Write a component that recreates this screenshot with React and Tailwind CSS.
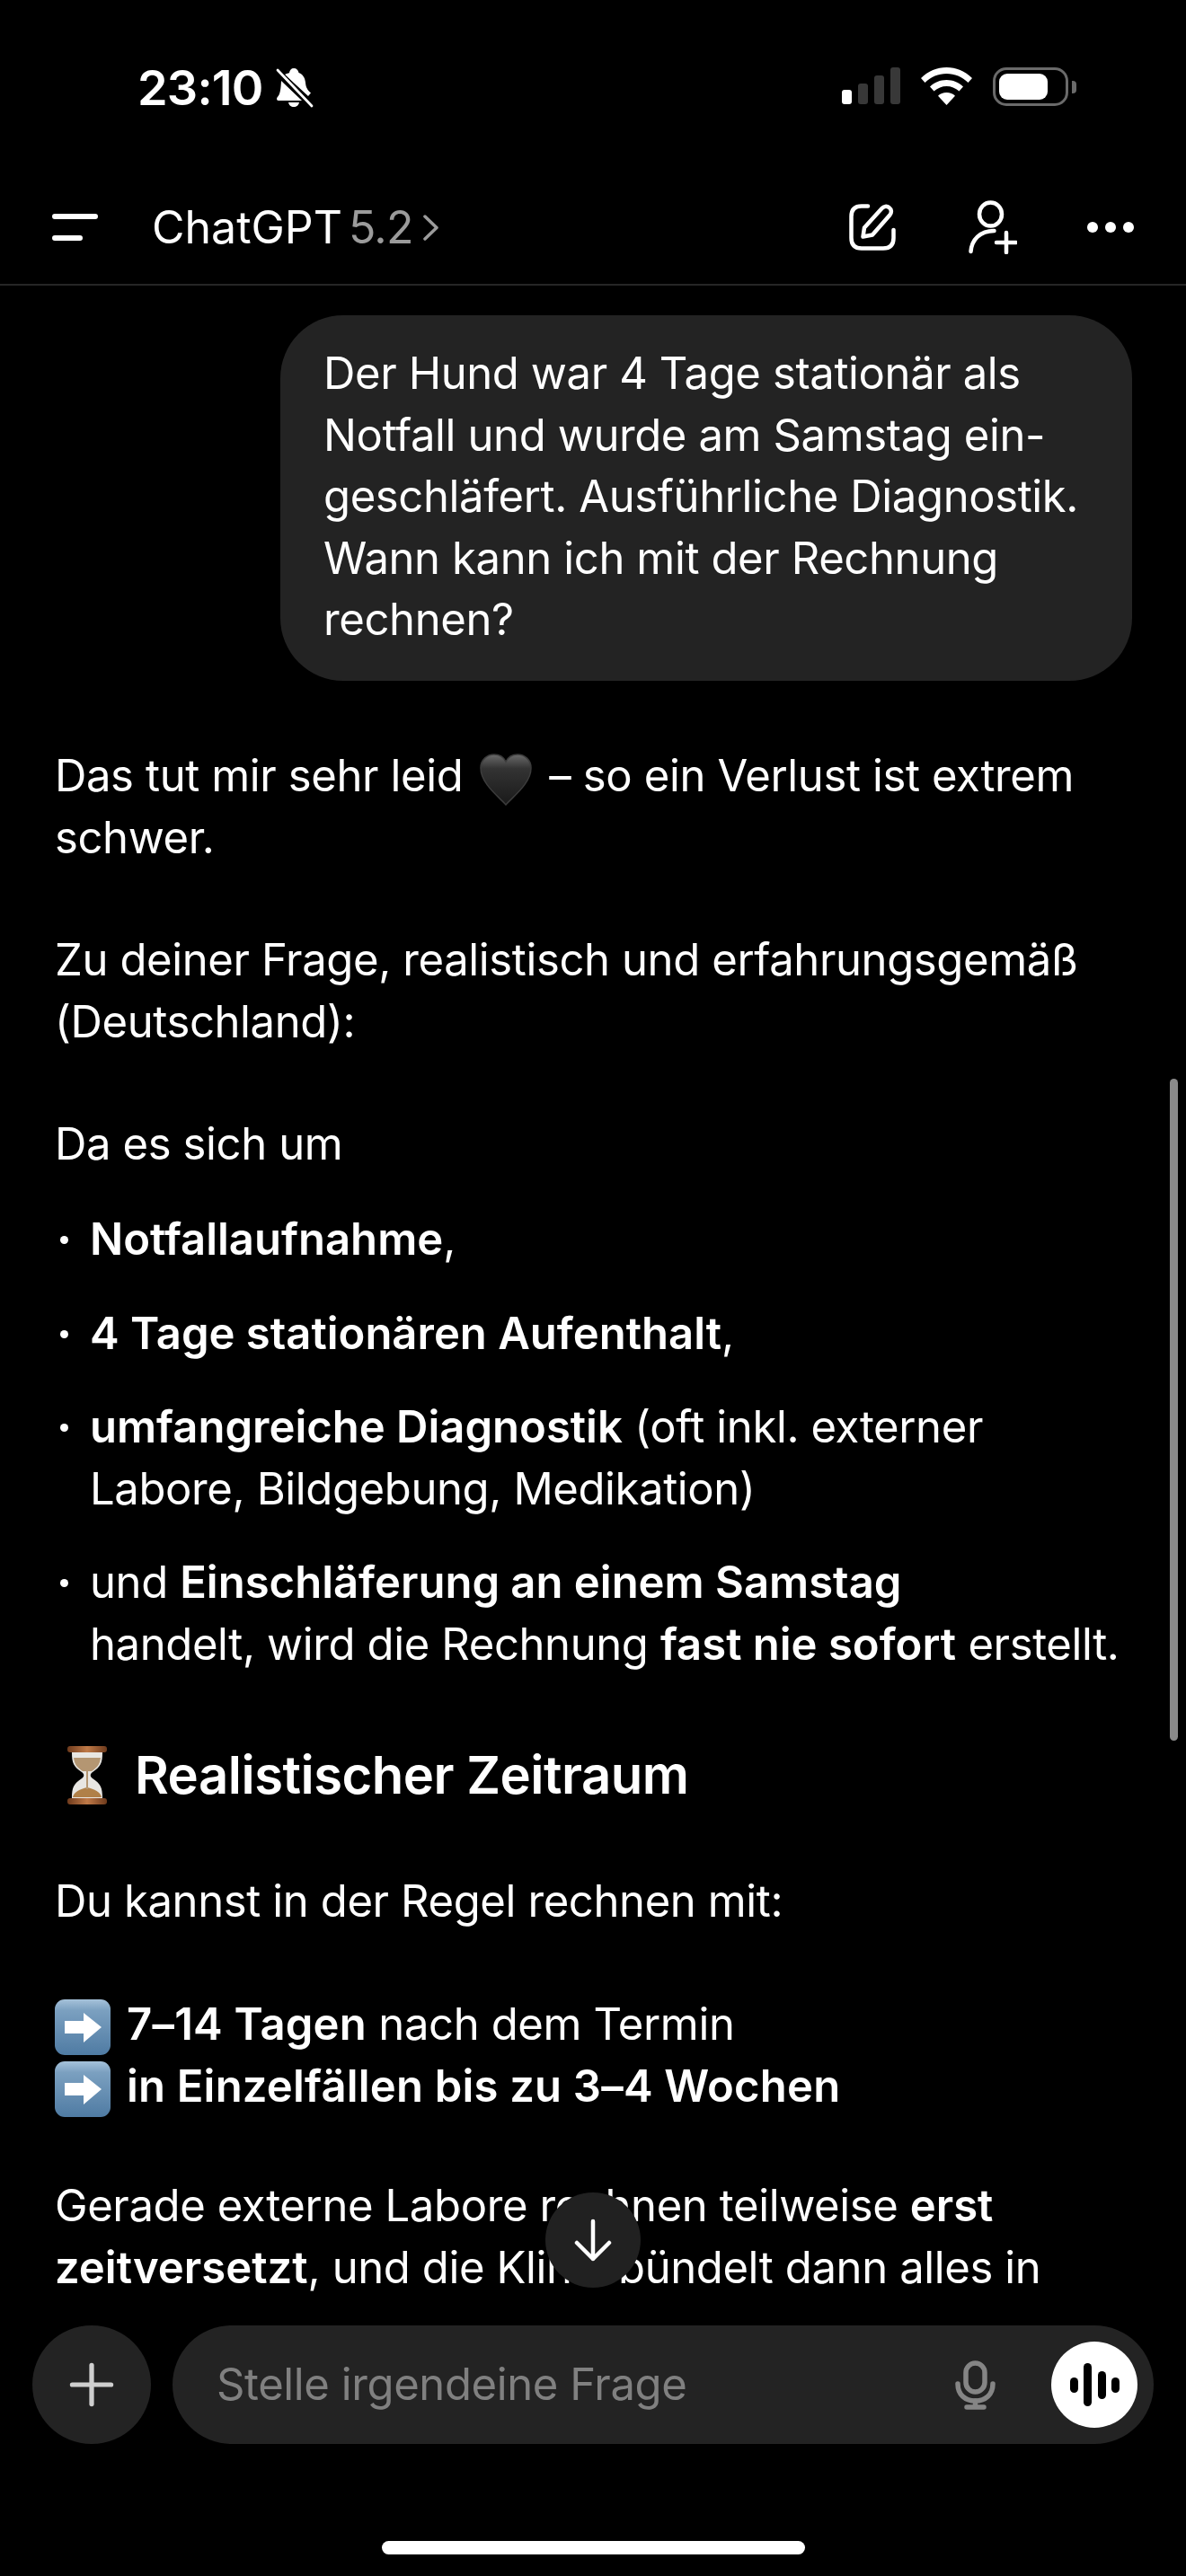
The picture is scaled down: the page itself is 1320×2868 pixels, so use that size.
import { Plus } from 'lucide-react';

const Bell = () => (
  <svg width="42" height="46" viewBox="0 0 42 46" className="ml-[14px]">
    <path fill="#fff" d="M20 1c3 0 5 2 5.500 5 5 2 7 6 7.500 11 .4 5 2 8 6 11.500L36 32 10 8c2-1 4-1.500 5-2 .5-3 2-5 5-5zM6 15l23 22H3c-2 0-2.500-2-1.500-3.500C5 30 5.500 24 6 15zM14 39h12c-.5 3-3 5-6 5s-5.500-2-6-5z" />
    <path stroke="#000" strokeWidth="6" d="M1 3l40 41" />
    <path stroke="#fff" strokeWidth="2.800" strokeLinecap="round" d="M2 3l38 40" />
  </svg>
);

const Signal = () => (
  <svg width="65" height="41" viewBox="0 0 65 41">
    <rect x="0" y="25" width="11" height="16" rx="3" fill="#fff" />
    <rect x="18" y="18" width="11" height="23" rx="3" fill="#383838" />
    <rect x="36" y="9" width="11" height="32" rx="3" fill="#383838" />
    <rect x="54" y="0" width="11" height="41" rx="3" fill="#383838" />
  </svg>
);

const Wifi = () => (
  <svg width="57" height="42" viewBox="0 0 57 42" fill="#fff">
    <path d="M28.500 0C39 0 49 4 57 12l-4.500 5C46 10.500 37.500 7 28.500 7S11 10.500 4.500 17L0 12C8 4 18 0 28.500 0z" />
    <path d="M28.500 14c7 0 13.500 2.700 18.500 7.500l-4.500 5C38.500 23 33.500 21 28.500 21s-10 2-14 5.500l-4.500-5C15 16.700 21.500 14 28.500 14z" />
    <path d="M28.500 28c3.700 0 7 1.300 9.500 3.700L28.500 42 19 31.700c2.500-2.400 5.800-3.700 9.500-3.700z" />
  </svg>
);

const Battery = () => (
  <div className="flex items-center ml-[23px]">
    <div className="w-[84px] h-[43px] rounded-[15px] border-[3px] border-[#6a6a6a] p-[4px]">
      <div className="w-[54px] h-full rounded-[9px] bg-white" />
    </div>
    <div className="w-[5px] h-[14px] ml-[4px] rounded-r-[4px] bg-[#6a6a6a]" />
  </div>
);

const Hamburger = () => (
  <svg width="51" height="30" viewBox="0 0 51 30">
    <path stroke="#fff" strokeWidth="6" strokeLinecap="round" d="M3 3h45M3 27h28" />
  </svg>
);

const EditIcon = () => (
  <svg width="52" height="52" viewBox="0 0 52 52" fill="none" stroke="#fff" strokeWidth="4.500" strokeLinecap="round" strokeLinejoin="round">
    <path d="M21 2.500h-7C6.500 2.500 2.500 6.500 2.500 14v24c0 7.500 4 11.500 11.500 11.500h24c7.500 0 11.500-4 11.500-11.500v-9" />
    <path d="M15.500 36.500l1.500-10L36.500 5c2-2.300 5.500-3 8-1 2.700 2 3.200 5.500 1 8.200L26 34.500z" />
  </svg>
);

const AddUserIcon = () => (
  <svg width="54" height="60" viewBox="0 0 54 60" fill="none" stroke="#fff" strokeWidth="4.500" strokeLinecap="round">
    <ellipse cx="24.500" cy="15.500" rx="12.500" ry="13" />
    <path d="M2.500 57c1-13 10-23 26-23" />
    <path d="M42 36v22M31 47h22" />
  </svg>
);

const Dots = () => (
  <svg width="52" height="12" viewBox="0 0 52 12" fill="#fff">
    <circle cx="6" cy="6" r="6" />
    <circle cx="26" cy="6" r="6" />
    <circle cx="46" cy="6" r="6" />
  </svg>
);

const Heart = () => (
  <svg width="58" height="58" viewBox="0 0 58 58" className="inline-block align-[-16px] mx-[19px]">
    <defs>
      <linearGradient id="heartFill" x1="0" y1="0" x2="0" y2="1">
        <stop offset="0" stopColor="#6b6b6b" />
        <stop offset="0.28" stopColor="#333" />
        <stop offset="1" stopColor="#1a1a1a" />
      </linearGradient>
    </defs>
    <path fill="url(#heartFill)" stroke="#3c3c3c" strokeWidth="1.500" d="M29 57C20 47 1 33 1 16 1 7 8 1 16 1c6 0 10.500 3 13 8 2.500-5 7-8 13-8 8 0 15 6 15 15 0 17-19 31-28 41z" />
  </svg>
);

const Hourglass = () => (
  <svg width="44" height="65" viewBox="0 0 44 65" className="inline-block align-[-12px] mr-[31px]">
    <defs>
      <linearGradient id="wood" x1="0" y1="0" x2="1" y2="0">
        <stop offset="0" stopColor="#6e3a1c" />
        <stop offset="0.5" stopColor="#c07a48" />
        <stop offset="1" stopColor="#6e3a1c" />
      </linearGradient>
    </defs>
    <path fill="#e8e6e2" d="M5 7h34c0 12-2 16-11 22-3 2-3 5 0 7 9 6 11 10 11 22H5c0-12 2-16 11-22 3-2 3-5 0-7C7 23 5 19 5 7z" />
    <path fill="#b49672" d="M7 13h30c-1 8-4 11-10 15h-10C11 24 8 21 7 13z" />
    <path fill="#b08048" d="M6 57c1-6 8-9 16-11 8 2 15 5 16 11z" />
    <path fill="#b49672" d="M21 28h2v20h-2z" />
    <rect x="0" y="0" width="44" height="7" rx="3" fill="url(#wood)" />
    <rect x="0" y="58" width="44" height="7" rx="3" fill="url(#wood)" />
  </svg>
);

const ArrowEmoji = () => (
  <svg width="62" height="62" viewBox="0 0 62 62" className="inline-block align-[-17px] mr-[18px]">
    <defs>
      <linearGradient id="blueBox" x1="0" y1="0" x2="0" y2="1">
        <stop offset="0" stopColor="#a6c2da" />
        <stop offset="0.2" stopColor="#7ba0c0" />
        <stop offset="1" stopColor="#4f7ba3" />
      </linearGradient>
    </defs>
    <rect width="62" height="62" rx="11" fill="url(#blueBox)" />
    <path fill="#fff" d="M11 24h21V15l20 16-20 17v-10H11z" />
  </svg>
);

const Mic = () => (
  <svg width="45" height="55" viewBox="0 0 45 55" fill="none" stroke="#858585" strokeWidth="5.500" strokeLinecap="round">
    <rect x="12" y="3" width="21" height="32" rx="10.500" />
    <path d="M3 26c0 12 8 19 19.500 19S42 38 42 26" />
    <path d="M22.500 45v7M13 52h19" />
  </svg>
);

const VoiceBars = () => (
  <svg width="55" height="48" viewBox="0 0 55 48" fill="#000">
    <rect x="0" y="16" width="9" height="17" rx="4.500" />
    <rect x="15" y="0" width="9" height="48" rx="4.500" />
    <rect x="31" y="9" width="9" height="31" rx="4.500" />
    <rect x="46" y="16" width="9" height="17" rx="4.500" />
  </svg>
);

const Bullet = ({ children, first }) => (
  <li className={`flex ${first ? 'mt-0' : 'mt-[36px]'}`}>
    <span className="w-[39px] shrink-0 flex items-start pt-[30px] pl-[6px]">
      <span className="w-[9px] h-[9px] rounded-full bg-white" />
    </span>
    <span>{children}</span>
  </li>
);

export default function App() {
  return (
    <div className="relative h-[2868px] w-[1320px] flex flex-col overflow-hidden bg-black text-white font-['Inter',sans-serif]">
      {/* status bar */}
      <div className="h-[190px] shrink-0 flex justify-between pt-[75px] pl-[153px] pr-[122px]">
        <div className="flex items-start">
          <span className="text-[54px] leading-[45px] font-semibold tracking-[-0.8px]">23:10</span>
          <Bell />
        </div>
        <div className="flex items-start gap-[23px]">
          <Signal />
          <div className="flex items-start">
            <Wifi />
            <Battery />
          </div>
        </div>
      </div>

      {/* header */}
      <div className="h-[128px] shrink-0 flex items-center justify-between pl-[58px] pr-[58px] border-b-2 border-[#262626]">
        <div className="flex items-center">
          <Hamburger />
          <div className="ml-[60px] flex items-center text-[50px] leading-[60px] tracking-[-0.4px]">
            <span className="tracking-[0px]">ChatGPT</span>
            <span className="ml-[7px] tracking-[-0.8px] text-[#9b9b9b]">5.2</span>
            <svg width="17" height="29" viewBox="0 0 17 29" fill="none" stroke="#9b9b9b" strokeWidth="3.500" strokeLinecap="round" strokeLinejoin="round" className="ml-[11px]">
              <path d="M2 2l13 12.500L2 27" />
            </svg>
          </div>
        </div>
        <div className="flex items-center">
          <EditIcon />
          <div className="ml-[81px]"><AddUserIcon /></div>
          <div className="ml-[78px]"><Dots /></div>
        </div>
      </div>

      {/* chat */}
      <div className="flex-1 min-h-0 overflow-hidden pt-[33px] pl-[61px] pr-[30px] text-[49px] leading-[68.6px] tracking-[-0.38px]">
        <div className="flex justify-end pr-[30px]">
          <div className="w-[948px] rounded-[70px] bg-[#232323] pl-[48px] pt-[31px] pb-[33px]">
            Der Hund war 4 Tage stationär als<br />
            Notfall und wurde am Samstag ein-<br />
            geschläfert. Ausführliche Diagnostik.<br />
            Wann kann ich mit der Rechnung<br />
            rechnen?
          </div>
        </div>

        <p className="mt-[72px]">
          Das tut mir sehr leid<Heart />– so ein Verlust ist extrem<br />
          schwer.
        </p>
        <p className="mt-[68px]">
          Zu deiner Frage, realistisch und erfahrungsgemäß<br />
          (Deutschland):
        </p>
        <p className="mt-[68px]">Da es sich um</p>
        <ul className="mt-[37px]">
          <Bullet first><strong className="font-semibold tracking-[0px]">Notfallaufnahme</strong>,</Bullet>
          <Bullet><strong className="font-semibold tracking-[0px]">4 Tage stationären Aufenthalt</strong>,</Bullet>
          <Bullet>
            <strong className="font-semibold tracking-[0px]">umfangreiche Diagnostik</strong> (oft inkl. externer<br />
            Labore, Bildgebung, Medikation)
          </Bullet>
          <Bullet>
            und <strong className="font-semibold tracking-[0px]">Einschläferung an einem Samstag</strong><br />
            handelt, wird die Rechnung <strong className="font-semibold tracking-[0px]">fast nie sofort</strong> erstellt.
          </Bullet>
        </ul>

        <h2 className="mt-[70px] text-[58px] leading-[80px] font-semibold tracking-[-0.5px] pl-[14px]">
          <Hourglass />Realistischer Zeitraum
        </h2>

        <p className="mt-[67px]">Du kannst in der Regel rechnen mit:</p>
        <p className="mt-[69px]">
          <ArrowEmoji /><strong className="font-semibold tracking-[0.2px]">7–14 Tagen</strong> nach dem Termin<br />
          <ArrowEmoji /><strong className="font-semibold tracking-[0.2px]">in Einzelfällen bis zu 3–4 Wochen</strong>
        </p>
        <p className="mt-[65px]">
          Gerade externe Labore rechnen teilweise <strong className="font-semibold tracking-[0px]">erst</strong><br />
          <strong className="font-semibold tracking-[0px]">zeitversetzt</strong>, und die Klinik bündelt dann alles in
        </p>
      </div>

      {/* composer */}
      <div className="h-[298px] shrink-0 pt-[19px] px-[36px]">
        <div className="flex gap-[24px]">
          <div className="w-[132px] h-[132px] rounded-full bg-[#232323] flex items-center justify-center">
            <Plus size={74} strokeWidth={1.7} color="#cfcfcf" />
          </div>
          <div className="w-[1092px] h-[132px] rounded-full bg-[#232323] flex items-center pl-[49px] pr-[18px]">
            <span className="flex-1 text-[49px] tracking-[-0.4px] text-[#808080]">Stelle irgendeine Frage</span>
            <Mic />
            <div className="ml-[62px] w-[96px] h-[96px] rounded-full bg-white flex items-center justify-center">
              <VoiceBars />
            </div>
          </div>
        </div>
        <div className="mt-[108px] mx-auto w-[471px] h-[15px] rounded-full bg-white" />
      </div>

      {/* scroll thumb */}
      <div className="absolute left-[1302px] top-[1201px] w-[9px] h-[737px] rounded-full bg-[#8a8a8a]" />

      {/* scroll to bottom button */}
      <div className="absolute left-[607px] top-[2441px] w-[106px] h-[106px] rounded-full bg-[#212121] flex items-center justify-center">
        <svg width="42" height="48" viewBox="0 0 42 48" fill="none" stroke="#fff" strokeWidth="4.500" strokeLinecap="round" strokeLinejoin="round">
          <path d="M21 3v42M3 27l18 18 18-18" />
        </svg>
      </div>
    </div>
  );
}
